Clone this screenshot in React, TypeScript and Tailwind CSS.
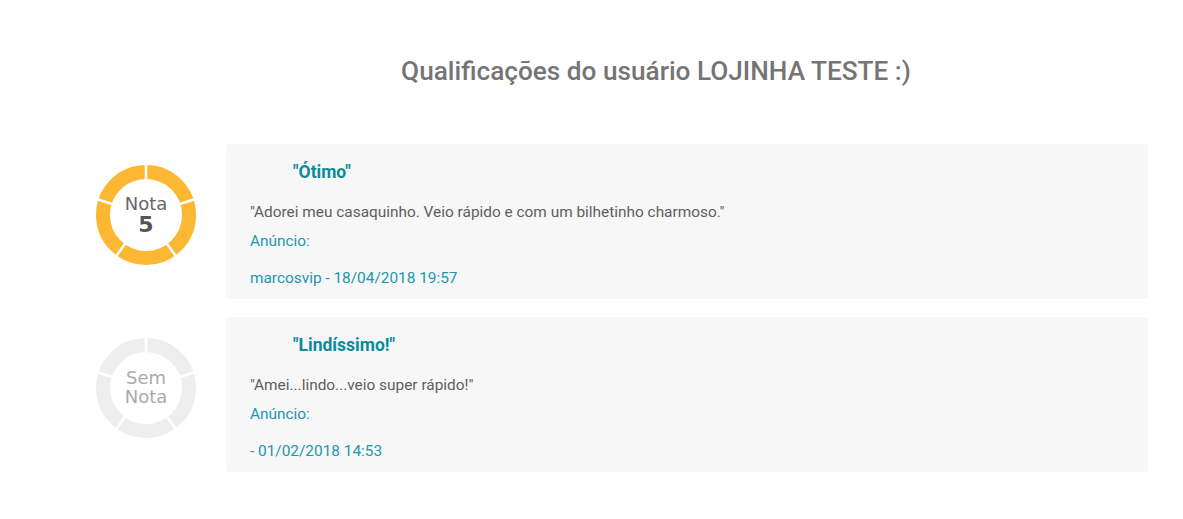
import React from "react";

function Donut({ color, children }: { color: string; children: React.ReactNode }) {
  const angles = [0, 72, 144, 216, 288];
  return (
    <div className="relative w-[100px] h-[100px] shrink-0">
      <svg width="100" height="100" viewBox="0 0 100 100" className="absolute inset-0">
        <circle cx="50" cy="50" r="43" fill="none" stroke={color} strokeWidth="14" />
        {angles.map((a) => (
          <line
            key={a}
            x1="50"
            y1="-1"
            x2="50"
            y2="16"
            stroke="#ffffff"
            strokeWidth="2.5"
            transform={`rotate(${a} 50 50)`}
          />
        ))}
      </svg>
      <div className="absolute inset-0 flex flex-col items-center justify-center" style={{ fontFamily: '"DejaVu Sans", sans-serif' }}>
        {children}
      </div>
    </div>
  );
}

function Review({
  title,
  comment,
  footer,
  donut,
}: {
  title: string;
  comment: string;
  footer: string;
  donut: React.ReactNode;
}) {
  return (
    <div className="flex items-start">
      <div className="w-[130px] shrink-0 pt-[21px]">{donut}</div>
      <div className="w-[922px] bg-[#f7f7f7] rounded-[4px] pl-[24px] pt-[17px] pb-[12px] h-[155px]">
        <div className="pl-[43px] text-[17.5px] leading-[22px] font-bold text-[#0b8a9c]">{title}</div>
        <div className="mt-[19px] text-[15.4px] leading-[20px] text-[#5e5e5e]">{comment}</div>
        <div className="mt-[9px] text-[15.4px] leading-[20px] text-[#1b97ae]">Anúncio:</div>
        <div className="mt-[17px] text-[15.4px] leading-[20px] text-[#1b97ae]">{footer}</div>
      </div>
    </div>
  );
}

export default function App() {
  return (
    <div className="w-[1183px] h-[519px] bg-white" style={{ fontFamily: 'Roboto, "Liberation Sans", sans-serif' }}>
      <div className="pt-[53px] pl-[96px]">
        <h1 className="text-center w-[1120px] text-[26.2px] leading-[36px] font-medium text-[#757575]">
          Qualificações do usuário LOJINHA TESTE :)
        </h1>
        <div className="mt-[55px] flex flex-col gap-[18px]">
          <Review
            title={'"Ótimo"'}
            comment={'"Adorei meu casaquinho. Veio rápido e com um bilhetinho charmoso."'}
            footer="marcosvip - 18/04/2018 19:57"
            donut={
              <Donut color="#fdb833">
                <div className="text-[18px] leading-[20px] text-[#666666]">Nota</div>
                <div className="text-[22px] leading-[22px] font-bold text-[#555555]">5</div>
              </Donut>
            }
          />
          <Review
            title={'"Lindíssimo!"'}
            comment={'"Amei...lindo...veio super rápido!"'}
            footer="- 01/02/2018 14:53"
            donut={
              <Donut color="#eeeeee">
                <div className="-mt-[2px] text-[18px] leading-[19px] text-[#aaaaaa]">Sem</div>
                <div className="text-[18px] leading-[19px] text-[#aaaaaa]">Nota</div>
              </Donut>
            }
          />
        </div>
      </div>
    </div>
  );
}
